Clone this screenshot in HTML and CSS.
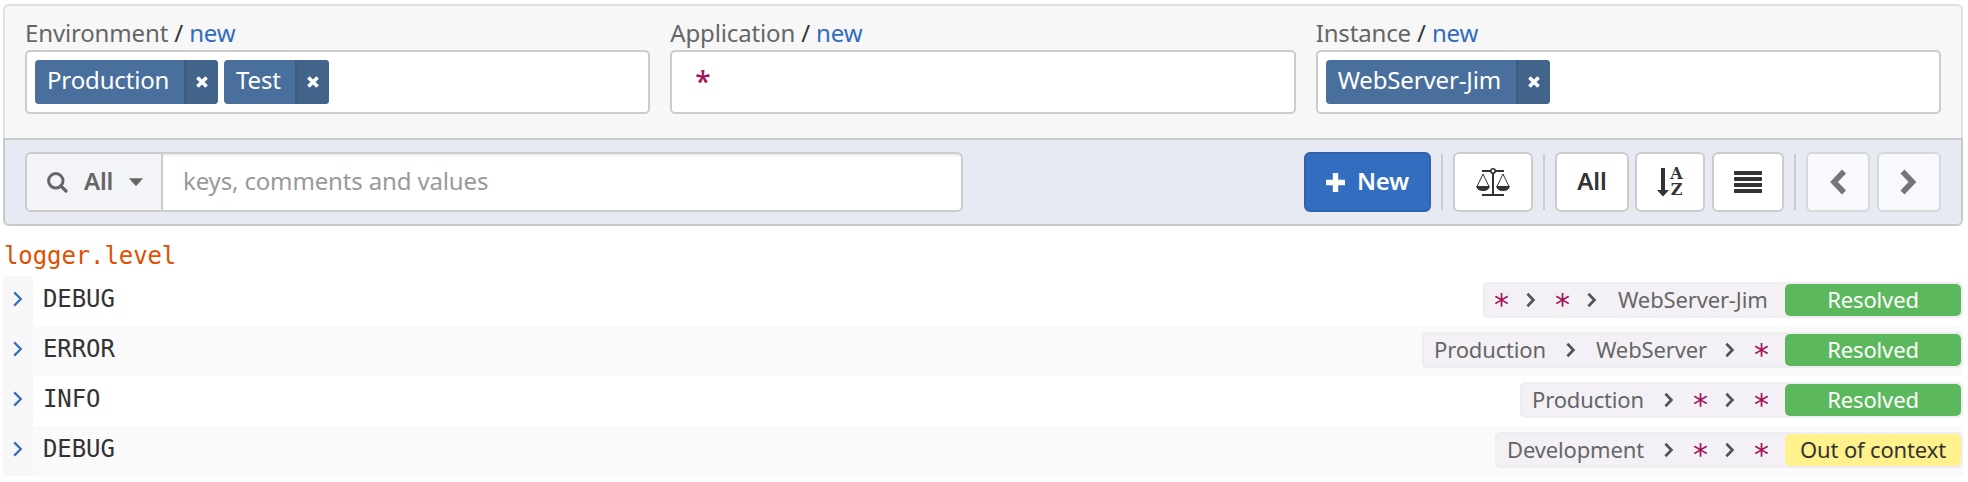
FILE: index.html
```html
<!DOCTYPE html>
<html lang="en">
<head>
<meta charset="utf-8">
<title>Configuration</title>
<link rel="stylesheet" href="styles.css">
</head>
<body>
<svg class="defs" width="0" height="0">
  <symbol id="x" viewBox="0 0 14 14"><path d="M2.4 2.4l9.2 9.2M11.6 2.4l-9.2 9.2" stroke="currentColor" stroke-width="3.6" stroke-linecap="butt"/></symbol>
  <symbol id="chev" viewBox="0 0 10 16"><path d="M1.2 1.4L7.8 8l-6.6 6.6" fill="none" stroke="currentColor" stroke-width="2.2"/></symbol>
  <symbol id="sep" viewBox="0 0 10 16"><path d="M1.4 1.8L7.4 8l-6 6.2" fill="none" stroke="currentColor" stroke-width="2.7"/></symbol>
</svg>
<section class="panel">
  <div class="filters">
    <div class="field">
      <div class="label"><span class="name">Environment</span> / <a class="link">new</a></div>
      <div class="box">
        <span class="tag"><span class="tag-text tag-prod">Production</span><span class="tag-x"><svg width="14" height="14"><use href="#x"/></svg></span></span>
        <span class="tag"><span class="tag-text tag-test">Test</span><span class="tag-x"><svg width="14" height="14"><use href="#x"/></svg></span></span>
      </div>
    </div>
    <div class="field">
      <div class="label"><span class="name">Application</span> / <a class="link">new</a></div>
      <div class="box"><span class="wild">*</span></div>
    </div>
    <div class="field">
      <div class="label"><span class="name">Instance</span> / <a class="link">new</a></div>
      <div class="box">
        <span class="tag"><span class="tag-text tag-jim">WebServer-Jim</span><span class="tag-x"><svg width="14" height="14"><use href="#x"/></svg></span></span>
      </div>
    </div>
  </div>
  <div class="toolbar">
    <div class="search">
      <div class="scope">
        <svg class="mag" width="21" height="21" viewBox="0 0 21 21" fill="none" stroke="#666"><circle cx="8.8" cy="8.8" r="7.2" stroke-width="3"/><path d="M13.8 13.8l5.2 5.2" stroke-width="3.2" stroke-linecap="round"/></svg>
        <span class="scope-text">All</span>
        <svg width="14" height="8" viewBox="0 0 14 8"><path d="M0 .2h14L8 7.2q-1 .9-2 0z" fill="#666"/></svg>
      </div>
      <div class="query">keys, comments and values</div>
    </div>
    <div class="actions">
      <div class="btn primary"><svg width="19" height="19" viewBox="0 0 19 19"><path d="M9.5 0v19M0 9.5h19" stroke="#fff" stroke-width="5.4"/></svg><span>New</span></div>
      <i class="rule"></i>
      <div class="btn scales"><svg width="36" height="30" viewBox="0 0 36 30" fill="none" stroke="#333"><path d="M7 4h22M18 6v21M7 28h22" stroke-width="2"/><circle cx="18" cy="4" r="2.2" fill="#fff" stroke-width="1.6"/><path d="M2 19.5L8 7l6 12.5M22 19.5L28 7l6 12.5" stroke-width="1"/><path d="M1 19h14q-1 5-7 5t-7-5zM21 19h14q-1 5-7 5t-7-5z" fill="#333" stroke="none"/></svg></div>
      <i class="rule"></i>
      <div class="btn all"><span>All</span></div>
      <div class="btn sort"><svg width="12" height="29" viewBox="0 0 12 29" fill="#333"><path d="M4 0h4v22h4l-6 6.5L0 22h4z"/></svg><span class="az"><span>A</span><span>Z</span></span></div>
      <div class="btn lines"><svg width="28" height="22" viewBox="0 0 28 22" fill="#333"><rect width="28" height="4" rx=".8"/><rect y="6" width="28" height="4" rx=".8"/><rect y="12" width="28" height="4" rx=".8"/><rect y="18" width="28" height="4" rx=".8"/></svg></div>
      <i class="rule"></i>
      <div class="btn nav prev"><svg width="18" height="28" viewBox="0 0 18 28"><path d="M15 3.5L5 14l10 10.5" fill="none" stroke="#747677" stroke-width="5.6"/></svg></div>
      <div class="btn nav"><svg width="18" height="28" viewBox="0 0 18 28"><path d="M2.5 3.5L12.5 14 2.5 24.5" fill="none" stroke="#747677" stroke-width="5.6"/></svg></div>
    </div>
  </div>
</section>
<section class="results">
  <div class="key">logger.level</div>
  <div class="row">
    <div class="toggle"><svg width="10" height="16"><use href="#chev"/></svg></div>
    <div class="cell"><span class="value">DEBUG</span>
      <div class="context"><span class="any">*</span><svg class="sep" width="10" height="16"><use href="#sep"/></svg><span class="any">*</span><svg class="sep" width="10" height="16"><use href="#sep"/></svg><span class="part jim">WebServer-Jim</span><span class="status ok">Resolved</span></div>
    </div>
  </div>
  <div class="row alt">
    <div class="toggle"><svg width="10" height="16"><use href="#chev"/></svg></div>
    <div class="cell"><span class="value">ERROR</span>
      <div class="context"><span class="part prod">Production</span><svg class="sep" width="10" height="16"><use href="#sep"/></svg><span class="part web">WebServer</span><svg class="sep" width="10" height="16"><use href="#sep"/></svg><span class="any">*</span><span class="status ok">Resolved</span></div>
    </div>
  </div>
  <div class="row">
    <div class="toggle"><svg width="10" height="16"><use href="#chev"/></svg></div>
    <div class="cell"><span class="value">INFO</span>
      <div class="context"><span class="part prod">Production</span><svg class="sep" width="10" height="16"><use href="#sep"/></svg><span class="any">*</span><svg class="sep" width="10" height="16"><use href="#sep"/></svg><span class="any">*</span><span class="status ok">Resolved</span></div>
    </div>
  </div>
  <div class="row alt">
    <div class="toggle"><svg width="10" height="16"><use href="#chev"/></svg></div>
    <div class="cell"><span class="value">DEBUG</span>
      <div class="context"><span class="part dev">Development</span><svg class="sep" width="10" height="16"><use href="#sep"/></svg><span class="any">*</span><svg class="sep" width="10" height="16"><use href="#sep"/></svg><span class="any">*</span><span class="status out">Out of context</span></div>
    </div>
  </div>
</section>
</body>
</html>
```
FILE: styles.css
```css
* { box-sizing: border-box; }
body { margin: 0; padding: 4px 5px 0 3px; height: 482px; overflow: hidden; background: #fff; color: #333; font: 24px/32px "Noto Sans", "Open Sans", sans-serif; letter-spacing: -.15px; }
svg { display: block; flex: none; }
.defs { position: absolute; }
.filters { height: 134px; padding: 11px 20px 0; display: grid; grid-template-columns: repeat(3, 1fr); gap: 20px; background: #f7f7f7; border: 2px solid #dfe0e4; border-bottom: 0; border-radius: 6px 6px 0 0; }
.label { height: 33px; white-space: nowrap; }
.name { color: #666; }
.link { color: #316cbe; }
.box { height: 64px; padding: 8px; display: flex; gap: 6px; background: #fff; border: 2px solid #ccc; border-radius: 5px; }
.tag { display: flex; height: 44px; border-radius: 4px; overflow: hidden; background: #496f9d; color: #fff; }
.tag-text { padding: 4px 0 0 12px; white-space: nowrap; }
.tag-prod { width: 149px; }
.tag-test { width: 71px; }
.tag-jim { width: 190px; }
.tag-x { width: 34px; background: #42638a; border-left: 2px solid #3d5c82; display: flex; align-items: center; justify-content: center; padding-bottom: 1px; }
.wild { color: #a31558; font: 600 28px/32px "Open Sans", sans-serif; padding: 5px 0 0 15px; }
.toolbar { height: 88px; padding: 12px 20px; display: flex; justify-content: space-between; background: #e7eaf3; border: 2px solid #c6c9ce; border-radius: 0 0 6px 6px; }
.search { display: flex; width: 938px; height: 60px; border: 2px solid #ccc; border-radius: 6px; overflow: hidden; background: #fff; }
.scope { width: 136px; padding-left: 20px; display: flex; align-items: center; background: #f3f4f8; border-right: 2px solid #ccc; color: #666; font-weight: 600; }
.scope-text { width: 45px; margin-left: 16px; padding-bottom: 2px; }
.query { flex: 1; padding: 11px 20px; color: #999; box-shadow: inset 0 2px 2px rgba(0,0,0,.07); }
.actions { display: flex; align-items: center; }
.btn { height: 60px; display: flex; align-items: center; justify-content: center; background: #fff; border: 2px solid #ccc; border-radius: 6px; font-weight: 600; }
.btn > span { padding-bottom: 2px; }
.primary { width: 127px; gap: 12px; background: #336dbf; border-color: #2e63ae; color: #fff; }
.rule { width: 2px; height: 56px; margin: 0 10px; background: #c5d0d2; }
.scales { width: 80px; }
.all { width: 74px; margin-right: 6px; }
.sort { width: 70px; margin-right: 7px; gap: 1px; }
.btn > .az { height: 32px; padding: 0; display: grid; grid-template-rows: 16px 16px; justify-items: center; font: 700 16px/16px "DejaVu Serif", serif; }
.lines { width: 72px; }
.nav { width: 64px; background: #f8f9fc; border-color: #d6d8da; }
.prev { margin-right: 7px; }
.key { height: 50px; padding: 14px 0 0 1px; color: #df5000; font: 24px/32px "DejaVu Sans Mono", monospace; letter-spacing: -.1px; }
.row { height: 50px; display: flex; }
.toggle { width: 30px; padding: 15px 0 0 10px; background: #f7f7f7; color: #316cbe; }
.cell { flex: 1; padding: 6px 0 0 10px; display: flex; justify-content: space-between; }
.alt .cell { background: #fafafa; }
.value { padding-top: 1px; font: 24px/32px "DejaVu Sans Mono", monospace; letter-spacing: -.1px; }
.context { height: 36px; padding: 0 0 0 10px; display: flex; align-items: center; background: #f3f1f6; border: 2px solid #eeedf0; border-radius: 5px; font-size: 22px; line-height: 30px; color: #555; }
.any { width: 19px; margin: 0 -3px; padding-top: 9px; color: #a31558; text-align: center; font: 30px/22px "DejaVu Sans Mono", monospace; letter-spacing: 0; }
.part { padding-bottom: 2px; white-space: nowrap; color: #666; }
.jim { width: 151px; padding-left: 1px; }
.prod { width: 114px; }
.web { width: 111px; }
.dev { width: 139px; }
.sep { margin: 0 20px 0 18px; }
.status { width: 176px; height: 32px; margin-left: 17px; text-align: center; border-radius: 5px; white-space: nowrap; }
.any + .status { margin-left: 17px; }
.ok { background: #5cb85c; color: #fff; }
.out { background: #fff18c; color: #333; }
```
